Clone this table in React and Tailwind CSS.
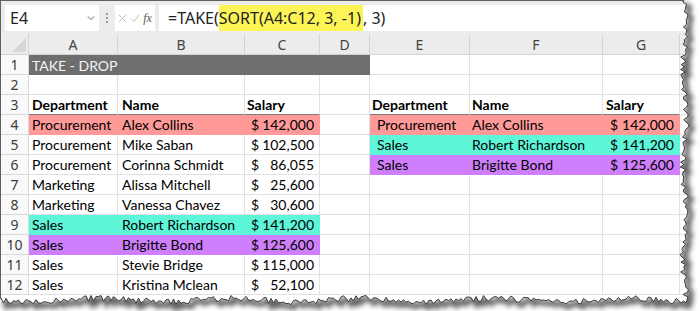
import React from 'react';

const COLS = ['A', 'B', 'C', 'D', 'E', 'F', 'G'];
const PINK = 'bg-[#ff9a99]';
const TEAL = 'bg-[#5ef6d8]';
const PURPLE = 'bg-[#d07ffc]';

const source = [
  ['Procurement', 'Alex Collins', '142,000', PINK],
  ['Procurement', 'Mike Saban', '102,500'],
  ['Procurement', 'Corinna Schmidt', '86,055'],
  ['Marketing', 'Alissa Mitchell', '25,600'],
  ['Marketing', 'Vanessa Chavez', '30,600'],
  ['Sales', 'Robert Richardson', '141,200', TEAL],
  ['Sales', 'Brigitte Bond', '125,600', PURPLE],
  ['Sales', 'Stevie Bridge', '115,000'],
  ['Sales', 'Kristina Mclean', '52,100'],
];

const result = [
  ['Procurement', 'Alex Collins', '142,000', PINK],
  ['Sales', 'Robert Richardson', '141,200', TEAL],
  ['Sales', 'Brigitte Bond', '125,600', PURPLE],
];

function Cell({ children, fill, className = '' }) {
  return (
    <div
      className={`h-[20px] flex items-center whitespace-nowrap overflow-hidden text-[14px] text-black border-b border-r ${
        fill ? `${fill} border-transparent` : 'border-[#e1e1e1]'
      } ${className}`}
    >
      {children}
    </div>
  );
}

function Money({ value, fill, pl = 'pl-[6px]' }) {
  return (
    <Cell fill={fill} className={`justify-between gap-[3px] ${pl} pr-[5px]`}>
      <span>$</span>
      <span>{value}</span>
    </Cell>
  );
}

function RowNum({ n }) {
  return (
    <div className="h-[20px] flex items-center justify-center text-[14px] text-[#3b3b3b] border-b border-r border-[#d9d9d9] bg-[#f9f9f9] font-['Noto_Sans']">
      {n}
    </div>
  );
}

// jagged "torn paper" edge, deterministic
const rnd = (i) => {
  const x = Math.sin(i * 12.9898 + 78.233) * 43758.5453;
  return x - Math.floor(x);
};
function tornPoints() {
  const pts = [[0, 0], [684, 0]];
  for (let y = 2, i = 0; y < 298; y += 2.5, i++) {
    pts.push([684.5 + (rnd(i) - 0.5) * 6 + Math.sin(y / 15) * 1.8, y]);
  }
  for (let x = 686, i = 0; x > 0; x -= 2.5, i++) {
    pts.push([x, 300 + (rnd(i + 400) - 0.5) * 6 + Math.sin(x / 21) * 1.8]);
  }
  pts.push([0, 300]);
  return pts;
}

function TornEdge() {
  const pts = tornPoints();
  const poly = 'M' + pts.map((p) => p[0].toFixed(1) + ' ' + p[1].toFixed(1)).join(' L') + ' Z';
  const edge = 'M' + pts.slice(1, -1).map((p) => p[0].toFixed(1) + ' ' + p[1].toFixed(1)).join(' L');
  return (
    <svg className="absolute inset-0 pointer-events-none" width="700" height="311" viewBox="0 0 700 311">
      <defs>
        <clipPath id="outside">
          <path d={'M0 0 H700 V311 H0 Z ' + poly} clipRule="evenodd" />
        </clipPath>
        <filter id="blur" x="-10%" y="-10%" width="120%" height="120%">
          <feGaussianBlur stdDeviation="2.4" />
        </filter>
      </defs>
      <path d={'M0 0 H700 V311 H0 Z ' + poly} fill="#ffffff" fillRule="evenodd" />
      <g clipPath="url(#outside)">
        <path d={edge} transform="translate(3 3)" fill="none" stroke="#5f5f5f" strokeWidth="5" filter="url(#blur)" />
      </g>
      <path d={edge} fill="none" stroke="#3a3a3a" strokeWidth="1" />
    </svg>
  );
}

export default function App() {
  return (
    <div className="relative w-[700px] h-[311px] bg-white overflow-hidden font-['Lato']">
      <div className="h-full border-l border-t border-[#5f5f5f] bg-white">
        {/* formula bar */}
        <div className="h-[33px] bg-[#ececec] flex items-start pt-[4px] pl-[4px] gap-[4px] font-['Noto_Sans'] text-[#222]">
          <div className="w-[94px] h-[26px] bg-white flex items-center justify-between pl-[5px] pr-[4px] text-[16px]">
            <span>E4</span>
            <svg width="8" height="6" viewBox="0 0 8 6">
              <path d="M1 1.5 L4 4.5 L7 1.5" fill="none" stroke="#666" strokeWidth="1" />
            </svg>
          </div>
          <div className="w-[8px] h-[26px] flex flex-col items-center justify-center gap-[2px]">
            <span className="w-[2px] h-[2px] bg-[#9a9a9a]" />
            <span className="w-[2px] h-[2px] bg-[#9a9a9a]" />
            <span className="w-[2px] h-[2px] bg-[#9a9a9a]" />
          </div>
          <div className="w-[40px] h-[26px] bg-white flex items-center justify-center gap-[3px]">
            <svg width="9" height="9" viewBox="0 0 9 9">
              <path d="M1 1 L8 8 M8 1 L1 8" stroke="#c2c2c2" strokeWidth="1" />
            </svg>
            <svg width="10" height="9" viewBox="0 0 10 9">
              <path d="M1 4.5 L4 7.5 L9 1" fill="none" stroke="#c2c2c2" strokeWidth="1" />
            </svg>
            <span className="font-['Liberation_Serif'] italic text-[12px] text-[#555] leading-none">fx</span>
          </div>
          <div className="flex-1 h-[26px] bg-white flex items-stretch pl-[9px] text-[16px] whitespace-nowrap">
            <span className="flex items-center">=TAKE(</span>
            <span className="flex items-center bg-[#fdf456] pr-[2px]">SORT(A4:C12, 3, -1)</span>
            <span className="flex items-center">, 3)</span>
          </div>
        </div>

        {/* sheet grid */}
        <div className="grid grid-cols-[28px_89px_127px_75px_50px_100px_133px_77px_1fr]">
          {/* column headers */}
          <div className="h-[21px] bg-[#ececec] border-b border-r border-[#d4d4d4] flex items-end justify-end pr-[2px] pb-[2px]">
            <svg width="14" height="14" viewBox="0 0 14 14">
              <path d="M14 0 L14 14 L0 14 Z" fill="#d6d6d6" />
            </svg>
          </div>
          {COLS.map((c) => (
            <div
              key={c}
              className="h-[21px] bg-[#ececec] border-b border-r border-[#d4d4d4] flex items-center justify-center text-[14px] text-[#444] font-['Noto_Sans']"
            >
              {c}
            </div>
          ))}
          <div className="h-[21px] bg-[#ececec] border-b border-[#d4d4d4]" />

          {/* row 1 */}
          <RowNum n={1} />
          <div className="col-span-4 h-[20px] bg-[#6f6e6e] flex items-center pl-[3px] text-[14px] text-[#f4f4f4]">
            TAKE - DROP
          </div>
          <Cell />
          <Cell />
          <Cell />
          <Cell />

          {/* row 2 */}
          <RowNum n={2} />
          {COLS.map((c) => (
            <Cell key={c} />
          ))}
          <Cell />

          {/* row 3 */}
          <RowNum n={3} />
          <Cell className="pl-[3px] font-bold !border-b-[#7a7a7a]">Department</Cell>
          <Cell className="pl-[4px] font-bold !border-b-[#7a7a7a]">Name</Cell>
          <Cell className="pl-[2px] font-bold !border-b-[#7a7a7a]">Salary</Cell>
          <Cell />
          <Cell className="pl-[2px] font-bold !border-b-[#7a7a7a]">Department</Cell>
          <Cell className="pl-[2px] font-bold !border-b-[#7a7a7a]">Name</Cell>
          <Cell className="pl-[3px] font-bold !border-b-[#7a7a7a]">Salary</Cell>
          <Cell />

          {/* rows 4-12 */}
          {source.map((r, i) => {
            const out = result[i];
            return (
              <React.Fragment key={i}>
                <RowNum n={i + 4} />
                <Cell fill={r[3]} className="pl-[3px]">{r[0]}</Cell>
                <Cell fill={r[3]} className="pl-[4px]">{r[1]}</Cell>
                <Money value={r[2]} fill={r[3]} />
                <Cell />
                {out ? (
                  <>
                    <Cell fill={out[3]} className="pl-[7px]">{out[0]}</Cell>
                    <Cell fill={out[3]} className="pl-[2px]">{out[1]}</Cell>
                    <Money value={out[2]} fill={out[3]} pl="pl-[7px]" />
                  </>
                ) : (
                  <>
                    <Cell />
                    <Cell />
                    <Cell />
                  </>
                )}
                <Cell />
              </React.Fragment>
            );
          })}
        </div>
      </div>
      <TornEdge />
    </div>
  );
}
